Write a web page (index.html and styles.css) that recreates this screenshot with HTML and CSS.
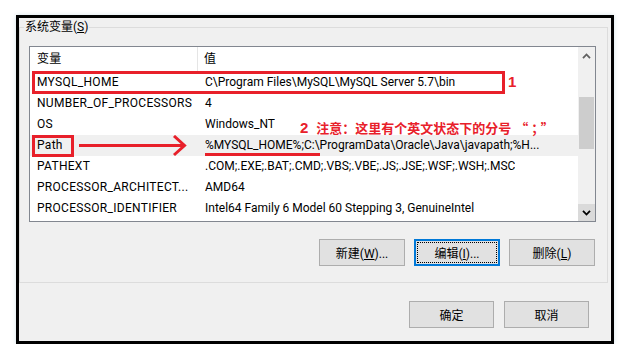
FILE: index.html
```html
<!DOCTYPE html>
<html lang="zh-CN">
<head>
    <meta charset="UTF-8">
    <title>系统变量</title>
    <link rel="stylesheet" href="styles.css">
</head>
<body>
    <div class="window">
        <fieldset class="group">
            <legend>系统变量(<u>S</u>)</legend>

            <div class="list">
                <div class="table">
                    <div class="row head">
                        <div class="name">变量</div>
                        <div class="value">值</div>
                    </div>
                    <div class="row">
                        <div class="name">MYSQL_HOME</div>
                        <div class="value">C\Program Files\MySQL\MySQL Server 5.7\bin</div>
                    </div>
                    <div class="row">
                        <div class="name">NUMBER_OF_PROCESSORS</div>
                        <div class="value">4</div>
                    </div>
                    <div class="row">
                        <div class="name">OS</div>
                        <div class="value">Windows_NT</div>
                    </div>
                    <div class="row hover">
                        <div class="name">Path</div>
                        <div class="value">%MYSQL_HOME%;C:\ProgramData\Oracle\Java\javapath;%H...</div>
                    </div>
                    <div class="row">
                        <div class="name">PATHEXT</div>
                        <div class="value">.COM;.EXE;.BAT;.CMD;.VBS;.VBE;.JS;.JSE;.WSF;.WSH;.MSC</div>
                    </div>
                    <div class="row">
                        <div class="name">PROCESSOR_ARCHITECT...</div>
                        <div class="value">AMD64</div>
                    </div>
                    <div class="row">
                        <div class="name">PROCESSOR_IDENTIFIER</div>
                        <div class="value">Intel64 Family 6 Model 60 Stepping 3, GenuineIntel</div>
                    </div>
                </div>

                <div class="scrollbar">
                    <div class="arrow">
                        <svg width="9" height="6" viewBox="0 0 9 6"><path d="M1 5.2 L4.5 1.5 L8 5.2" fill="none" stroke="#606060" stroke-width="1.8"/></svg>
                    </div>
                    <div class="track"><div class="thumb"></div></div>
                    <div class="arrow down">
                        <svg width="9" height="6" viewBox="0 0 9 6"><path d="M1 0.8 L4.5 4.5 L8 0.8" fill="none" stroke="#000" stroke-width="1.8"/></svg>
                    </div>
                </div>

                <!-- annotations -->
                <div class="mark box-home"></div>
                <div class="mark num-1">1</div>
                <div class="mark box-path"></div>
                <svg class="mark arrow-path" width="108" height="22" viewBox="0 0 108 22">
                    <path d="M0 10.5 H105" stroke="#e8202a" stroke-width="3" fill="none"/>
                    <path d="M95 1 L105.5 10.5 L95 20" stroke="#e8202a" stroke-width="3" fill="none"/>
                </svg>
                <div class="mark underline"></div>
                <div class="mark note"><span class="num">2</span>注意：这里有个英文状态下的分号<span class="q">“；”</span></div>
            </div>

            <div class="actions">
                <button class="btn">新建(<u>W</u>)...</button>
                <button class="btn focus">编辑(<u>I</u>)...</button>
                <button class="btn">删除(<u>L</u>)</button>
            </div>
        </fieldset>

        <div class="footer">
            <button class="btn">确定</button>
            <button class="btn">取消</button>
        </div>
    </div>
</body>
</html>
```

FILE: styles.css
```css
body {
    margin: 0;
    background: #fff;
    font-family: Roboto, "Noto Sans CJK SC", sans-serif;
    font-size: 12px;
    color: #000;
}
.window {
    width: 598px;
    height: 329px;
    margin: 15px 0 0 16px;
    box-sizing: border-box;
    border: 3px solid #000;
    background: #f0f0f0;
    box-shadow: 0 0 4px rgba(120, 170, 190, 0.35);
}
.group {
    width: 589px;
    box-sizing: border-box;
    margin: 1px 0 0 0;
    padding: 0 11px 16px 9px;
    border: 1px solid #dcdcdc;
}
.group legend {
    margin-left: -5px;
    padding: 0 1px;
    line-height: 16px;
}
.list {
    position: relative;
    display: flex;
    height: 176px;
    margin-top: 11px;
    box-sizing: border-box;
    border: 1px solid #828790;
    background: #fff;
    overflow: hidden;
}
.table {
    flex: 1;
}
.row {
    display: flex;
    height: 21px;
    line-height: 21px;
    white-space: nowrap;
}
.row.head {
    height: 25px;
    line-height: 25px;
}
.row.head .name {
    border-right: 1px solid #e5e5e5;
    width: 168px;
}
.row.hover {
    background: #f0f0f0;
}
.name {
    width: 169px;
    padding-left: 7px;
    box-sizing: border-box;
    overflow: hidden;
    letter-spacing: 0.3px;
}
.value {
    padding-left: 6px;
    overflow: hidden;
}
.scrollbar {
    width: 17px;
    display: flex;
    flex-direction: column;
    background: #f0f0f0;
}
.arrow {
    height: 17px;
    display: flex;
    align-items: center;
    justify-content: center;
}
.arrow.down {
    background: #dadada;
}
.track {
    flex: 1;
}
.thumb {
    height: 52px;
    margin: 33px 1px 0 1px;
    background: #cdcdcd;
}
.mark {
    position: absolute;
}
.box-home {
    left: 2px;
    top: 24px;
    width: 473px;
    height: 23px;
    box-sizing: border-box;
    border: 3px solid #e8202a;
}
.box-path {
    left: 2px;
    top: 88px;
    width: 42px;
    height: 22px;
    box-sizing: border-box;
    border: 3px solid #e8202a;
}
.arrow-path {
    left: 49px;
    top: 88px;
}
.underline {
    left: 175px;
    top: 106px;
    width: 115px;
    height: 3px;
    background: #e8202a;
}
.num-1, .note .num {
    font-family: "Liberation Sans", sans-serif;
    font-weight: bold;
    font-size: 15px;
    color: #e8202a;
}
.num-1 {
    left: 478px;
    top: 26px;
    line-height: 18px;
}
.note {
    left: 270px;
    top: 72px;
    line-height: 18px;
    font-family: "Noto Sans CJK SC", sans-serif;
    font-weight: bold;
    font-size: 13px;
    color: #e8202a;
    white-space: nowrap;
}
.note .num {
    margin-right: 8px;
}
.note .q {
    margin-left: 4px;
    letter-spacing: 3px;
}
.actions {
    display: flex;
    justify-content: flex-end;
    gap: 9px;
    margin-top: 17px;
    padding-right: 1px;
}
.btn {
    width: 86px;
    height: 27px;
    padding: 0;
    border: 1px solid #adadad;
    background: #e1e1e1;
    font-family: Roboto, "Noto Sans CJK SC", sans-serif;
    font-size: 12px;
    color: #000;
}
.btn.focus {
    border: 2px solid #0078d7;
    outline: 1px dotted #000;
    outline-offset: -4px;
}
.footer {
    display: flex;
    justify-content: flex-end;
    gap: 10px;
    margin-top: 18px;
    padding-right: 22px;
}
.footer .btn {
    width: 85px;
}
```
